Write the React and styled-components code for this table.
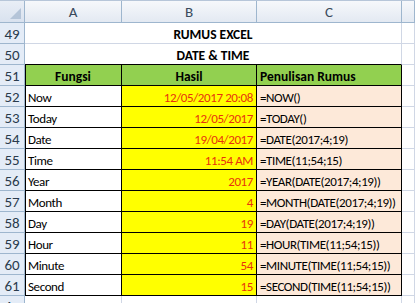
import React from "react";
import styled, { createGlobalStyle, css } from "styled-components";

const GlobalStyle = createGlobalStyle`
  html, body { margin: 0; padding: 0; background: #ffffff; overflow: hidden; }
  body { font-family: Carlito, Lato, "Liberation Sans", sans-serif; }
`;

const GRID = "#d0d7e5";
const HEAD_EDGE = "#9eb6ce";
const INK = "#000000";

const Sheet = styled.div`
  display: grid;
  grid-template-columns: 25px 97px 135px 145px 1fr;
  grid-template-rows: 22px repeat(14, 21px);
  width: 415px;
  height: 303px;
  overflow: hidden;
  border-top: 1px solid #b7c6d9;
  box-sizing: border-box;
  color: #000;
`;

const Corner = styled.div`
  position: relative;
  background: linear-gradient(#e9eef6, #d9e2ef);
  border-right: 1px solid ${HEAD_EDGE};
  border-bottom: 1px solid ${HEAD_EDGE};
  &::after {
    content: "";
    position: absolute;
    right: 3px;
    bottom: 3px;
    width: 0;
    height: 0;
    border-left: 11px solid transparent;
    border-bottom: 11px solid #b4c4d8;
  }
`;

const ColHead = styled.div`
  display: flex;
  align-items: center;
  justify-content: center;
  background: linear-gradient(#f6f8fb, #e3e9f2);
  border-right: 1px solid ${HEAD_EDGE};
  border-bottom: 1px solid ${HEAD_EDGE};
  color: #3a4a5c;
  font-size: 15px;
  padding-top: 1px;
`;

const RowHead = styled.div`
  display: flex;
  align-items: center;
  justify-content: center;
  background: #e4ecf7;
  border-right: 1px solid ${HEAD_EDGE};
  border-bottom: 1px solid ${HEAD_EDGE};
  color: #2a3b4c;
  font-size: 15px;
  padding-top: 1px;
`;

const Cell = styled.div`
  display: flex;
  align-items: center;
  justify-content: ${(p) => (p.$align === "right" ? "flex-end" : p.$align === "center" ? "center" : "flex-start")};
  padding: 2px 3px 0 3px;
  white-space: nowrap;
  overflow: hidden;
  background: ${(p) => p.$bg || "#ffffff"};
  color: ${(p) => p.$color || "#000000"};
  font-size: ${(p) => (p.$bold ? "13.5px" : "13px")};
  letter-spacing: ${(p) => (p.$bold ? "0" : "-0.4px")};
  font-weight: ${(p) => (p.$bold ? 700 : 400)};
  border-right: 1px solid ${(p) => (p.$inkRight ? INK : GRID)};
  border-bottom: 1px solid ${(p) => (p.$inkBottom ? INK : GRID)};
  ${(p) => p.$span && css`grid-column: span ${p.$span};`}
  ${(p) => p.$inkLeft && css`box-shadow: inset 1px 0 0 ${INK};`}
`;

const rows = [
  ["Now", "12/05/2017 20:08", "=NOW()"],
  ["Today", "12/05/2017", "=TODAY()"],
  ["Date", "19/04/2017", "=DATE(2017;4;19)"],
  ["Time", "11:54 AM", "=TIME(11;54;15)"],
  ["Year", "2017", "=YEAR(DATE(2017;4;19))"],
  ["Month", "4", "=MONTH(DATE(2017;4;19))"],
  ["Day", "19", "=DAY(DATE(2017;4;19))"],
  ["Hour", "11", "=HOUR(TIME(11;54;15))"],
  ["Minute", "54", "=MINUTE(TIME(11;54;15))"],
  ["Second", "15", "=SECOND(TIME(11;54;15))"],
];

const GREEN = "#92d050";
const YELLOW = "#ffff00";
const PEACH = "#fde9d9";
const RED = "#e8330c";

export default function App() {
  return (
    <>
      <GlobalStyle />
      <Sheet>
        <Corner />
        <ColHead>A</ColHead>
        <ColHead>B</ColHead>
        <ColHead>C</ColHead>
        <ColHead />

        <RowHead>49</RowHead>
        <Cell $span={3} $align="center" $bold>RUMUS EXCEL</Cell>
        <Cell />

        <RowHead>50</RowHead>
        <Cell $span={3} $align="center" $bold $inkBottom>DATE &amp; TIME</Cell>
        <Cell />

        <RowHead>51</RowHead>
        <Cell $bg={GREEN} $align="center" $bold $inkRight $inkBottom $inkLeft>Fungsi</Cell>
        <Cell $bg={GREEN} $align="center" $bold $inkRight $inkBottom>Hasil</Cell>
        <Cell $bg={GREEN} $bold $inkRight $inkBottom>Penulisan Rumus</Cell>
        <Cell />

        {rows.map(([fn, val, formula], i) => (
          <React.Fragment key={fn}>
            <RowHead>{52 + i}</RowHead>
            <Cell $inkRight $inkBottom $inkLeft>{fn}</Cell>
            <Cell $bg={YELLOW} $color={RED} $align="right" $inkRight $inkBottom>{val}</Cell>
            <Cell $bg={PEACH} $inkRight $inkBottom>{formula}</Cell>
            <Cell />
          </React.Fragment>
        ))}

        <RowHead>62</RowHead>
        <Cell />
        <Cell />
        <Cell />
        <Cell />
      </Sheet>
    </>
  );
}
